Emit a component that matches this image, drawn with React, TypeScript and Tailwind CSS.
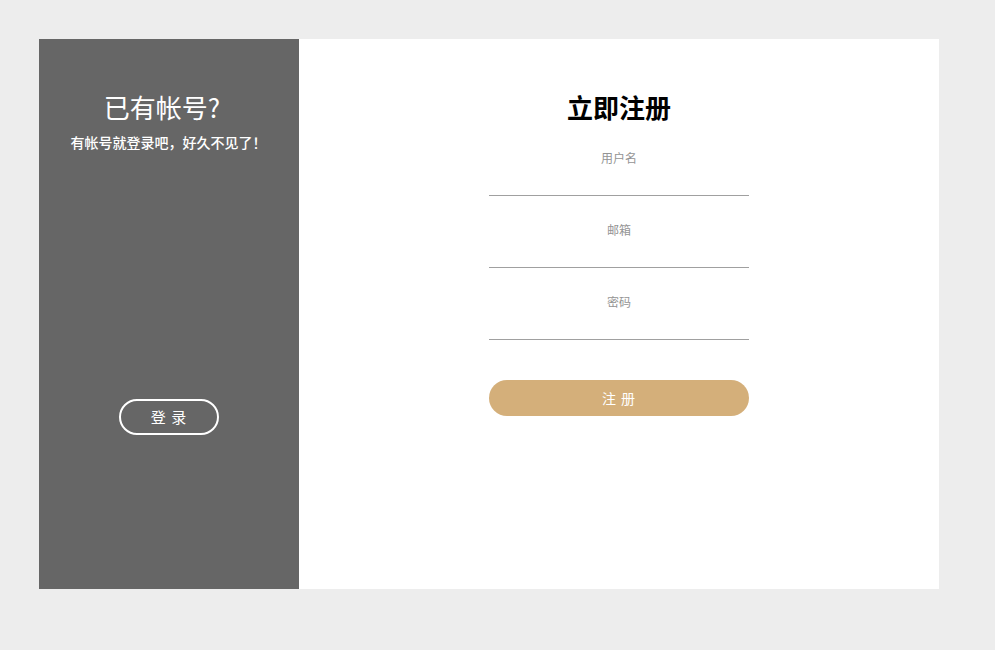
import React from "react";

const font = { fontFamily: '"Noto Sans CJK SC", "Noto Sans", sans-serif' };

function Field({ label, type }: { label: string; type: string }) {
  return (
    <div className="mt-[26px] w-[260px] flex flex-col items-center">
      <span className="text-[12px] leading-[16px] text-[#949494]">{label}</span>
      <input
        type={type}
        className="w-full h-[30px] border-b border-[#a0a0a0] bg-transparent outline-none text-center text-[14px]"
      />
    </div>
  );
}

export default function App() {
  return (
    <div className="w-[995px] h-[650px] bg-[#ededed] p-[39px]" style={font}>
      <div className="flex w-[900px] h-[550px] bg-white">
        <div className="w-[260px] h-full bg-[#666666] flex flex-col items-center pt-[52px] text-white">
          <h2 className="mr-[14px] text-[26px] leading-[32px] font-normal">已有帐号?</h2>
          <p className="mr-[1px] mt-[10px] text-[14px] leading-[18px] font-medium">有帐号就登录吧，好久不见了！</p>
          <button className="mt-[248px] w-[100px] h-[36px] rounded-full border-2 border-white text-[15px] tracking-[1px] text-white">
            登 录
          </button>
        </div>
        <div className="flex-1 flex flex-col items-center pt-[52px]">
          <h2 className="text-[26px] leading-[32px] font-bold text-black">立即注册</h2>
          <div className="mt-px" />
          <Field label="用户名" type="text" />
          <Field label="邮箱" type="email" />
          <Field label="密码" type="password" />
          <button className="mt-[40px] w-[260px] h-[36px] rounded-full bg-[#d4af7a] text-white text-[14px] tracking-[1px]">
            注 册
          </button>
        </div>
      </div>
    </div>
  );
}
